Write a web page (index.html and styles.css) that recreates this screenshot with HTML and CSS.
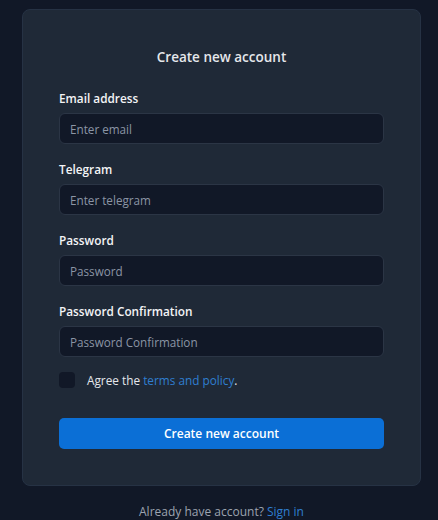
FILE: index.html
```html
<!DOCTYPE html>
<html lang="en">
  <head>
    <meta charset="UTF-8" />
    <meta name="viewport" content="width=device-width, initial-scale=1.0" />
    <title>Sign up</title>
    <link rel="stylesheet" href="styles.css">
  </head>
  <body>
    <div class="card">
      <h1>Create new account</h1>
      <form class="form">
        <div class="field">
          <label for="email">Email address</label>
          <input id="email" type="email" placeholder="Enter email" />
        </div>
        <div class="field">
          <label for="telegram">Telegram</label>
          <input id="telegram" type="text" placeholder="Enter telegram" />
        </div>
        <div class="field">
          <label for="password">Password</label>
          <input id="password" type="password" placeholder="Password" />
        </div>
        <div class="field">
          <label for="confirm">Password Confirmation</label>
          <input id="confirm" type="password" placeholder="Password Confirmation" />
        </div>
        <div class="agree">
          <span class="check"></span>
          <span>Agree the <a href="#">terms and policy</a>.</span>
        </div>
        <button type="button">Create new account</button>
      </form>
    </div>
    <p class="footer">Already have account? <a href="#">Sign in</a></p>
  </body>
</html>
```

FILE: styles.css
```css
body {
  font-family: "Open Sans", "Noto Sans", sans-serif;
  background-color: #111827;
  color: #e5e7eb;
  margin: 0;
  padding: 9px 17px 0 22px;
}

.card {
  background-color: #1f2937;
  border: 1px solid #263244;
  border-radius: 8px;
  padding: 36px 36px 35px 36px;
  box-sizing: border-box;
  height: 477px;
}

h1 {
  font-size: 13.5px;
  font-weight: 600;
  text-align: center;
  color: #e5e7eb;
  margin: 0 0 21px 0;
  line-height: 22px;
}

.form {
  display: flex;
  flex-direction: column;
}

.field {
  display: flex;
  flex-direction: column;
  margin-bottom: 16px;
}

label {
  font-size: 11.8px;
  font-weight: 600;
  color: #f3f4f6;
  line-height: 18px;
  margin-bottom: 6px;
}

input {
  font-family: inherit;
  font-size: 11.7px;
  height: 31px;
  box-sizing: border-box;
  background-color: #111827;
  border: 1px solid #2b3545;
  border-radius: 6px;
  padding: 0 10px;
  color: #e5e7eb;
}

input::placeholder {
  color: #8b95a5;
}

.agree {
  display: flex;
  align-items: center;
  gap: 12px;
  font-size: 11.8px;
  color: #e5e7eb;
  margin-top: -1px;
}

.check {
  width: 16px;
  height: 16px;
  border-radius: 4px;
  background-color: #111827;
}

a {
  color: #2f7fd1;
  text-decoration: none;
}

button {
  margin-top: 30px;
  height: 31px;
  font-family: inherit;
  font-size: 12px;
  font-weight: 600;
  color: #ffffff;
  background-color: #0b6fd6;
  border: none;
  border-radius: 5px;
  cursor: pointer;
}

.footer {
  text-align: center;
  font-size: 12px;
  color: #9ca3af;
  margin: 17px 0 0 0;
}
```
